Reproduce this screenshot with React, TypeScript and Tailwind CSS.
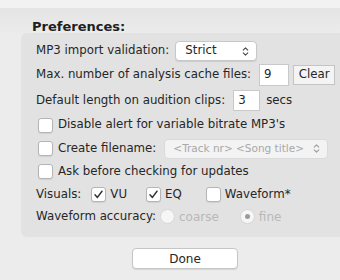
import { ChevronsUpDown } from "lucide-react";

const font = { fontFamily: '"DejaVu Sans", "Liberation Sans", sans-serif' };

function Check({ checked }: { checked?: boolean }) {
  return (
    <span className="flex h-[15px] w-[15px] shrink-0 items-center justify-center rounded-[3px] border border-[#b5b5b5] bg-white shadow-[0_1px_1px_rgba(0,0,0,0.08)]">
      {checked && (
        <svg width="11" height="11" viewBox="0 0 11 11" aria-hidden="true">
          <path d="M2 5.8 L4.4 8.4 L9 2.2" fill="none" stroke="#333" strokeWidth="1.5" strokeLinecap="round" strokeLinejoin="round" />
        </svg>
      )}
    </span>
  );
}

function Radio({ on }: { on?: boolean }) {
  return (
    <span className="flex h-[15px] w-[15px] shrink-0 items-center justify-center rounded-full border border-[#d6d6d6] bg-[#f6f6f6]">
      {on && <span className="h-[5px] w-[5px] rounded-full bg-[#9a9a9a]" />}
    </span>
  );
}

export default function App() {
  return (
    <div style={font} className="relative h-[280px] w-[340px] overflow-hidden bg-[#ececec] text-[11.8px] text-[#262626]">
      <div className="h-[8px] bg-[#f2f2f2] shadow-[0_1px_3px_rgba(0,0,0,0.12)]" />
      <div className="bg-gradient-to-b from-[#e4e4e4] to-[#ececec] pl-[32px] pt-[11px] text-[13px] font-bold leading-[16px] text-[#1e1e1e]">Preferences:</div>

      <div className="ml-[21px] mt-[-2px] h-[204px] rounded-l-[6px] bg-[#e2e2e2] pl-[15px] pt-[8px]">
        <div className="flex h-[20px] items-center">
          <span>MP3 import validation:</span>
          <span className="ml-[6px] flex h-[20px] w-[82px] items-center justify-between rounded-[4px] border border-[#c8c8c8] bg-white pl-[9px] pr-[5px] shadow-[0_1px_1px_rgba(0,0,0,0.1)]">
            Strict
            <ChevronsUpDown size={11} strokeWidth={2.2} className="text-[#444]" />
          </span>
        </div>

        <div className="mt-[3px] flex h-[22px] items-center">
          <span>Max. number of analysis cache files:</span>
          <span className="ml-[8px] flex h-[22px] w-[30px] items-center border border-[#c9c9c9] bg-white pl-[4px]">9</span>
          <span className="ml-[4px] flex h-[20px] w-[42px] items-center justify-center border border-[#c4c4c4] bg-[#f4f4f4]">Clear</span>
        </div>

        <div className="mt-[4px] flex h-[21px] items-center">
          <span>Default length on audition clips:</span>
          <span className="ml-[8px] flex h-[21px] w-[27px] items-center border border-[#c9c9c9] bg-white pl-[4px]">3</span>
          <span className="ml-[6px]">secs</span>
        </div>

        <div className="mt-[6px] flex h-[16px] items-center gap-[5px] pl-[2px]">
          <Check />
          <span>Disable alert for variable bitrate MP3's</span>
        </div>

        <div className="mt-[5px] flex h-[21px] items-center gap-[5px] pl-[2px]">
          <Check />
          <span>Create filename:</span>
          <span className="ml-[3px] flex h-[20px] w-[164px] items-center justify-between rounded-[4px] border border-[#dadada] bg-[#f3f3f3] pl-[8px] pr-[5px] text-[10.5px] text-[#a8a8a8]">
            &lt;Track nr&gt; &lt;Song title&gt;
            <ChevronsUpDown size={11} strokeWidth={2.2} className="text-[#9a9a9a]" />
          </span>
        </div>

        <div className="mt-[4px] flex h-[17px] items-center gap-[5px] pl-[2px]">
          <Check />
          <span>Ask before checking for updates</span>
        </div>

        <div className="mt-[6px] flex h-[17px] items-center">
          <span>Visuals:</span>
          <span className="ml-[10px] flex items-center gap-[4px]"><Check checked />VU</span>
          <span className="ml-[19px] flex items-center gap-[4px]"><Check checked />EQ</span>
          <span className="ml-[24px] flex items-center gap-[4px]"><Check />Waveform*</span>
        </div>

        <div className="mt-[5px] flex h-[17px] items-center">
          <span>Waveform accuracy:</span>
          <span className="ml-[4px] flex items-center gap-[4px] text-[12px] text-[#b8b8b8]"><Radio />coarse</span>
          <span className="ml-[21px] flex items-center gap-[4px] text-[12px] text-[#b8b8b8]"><Radio on />fine</span>
        </div>
      </div>

      <div className="mt-[11px] flex justify-center pl-[30px]">
        <span className="flex h-[21px] w-[106px] items-center justify-center rounded-[4px] border border-[#c6c6c6] bg-white text-[12px] shadow-[0_1px_1px_rgba(0,0,0,0.1)]">Done</span>
      </div>
    </div>
  );
}
